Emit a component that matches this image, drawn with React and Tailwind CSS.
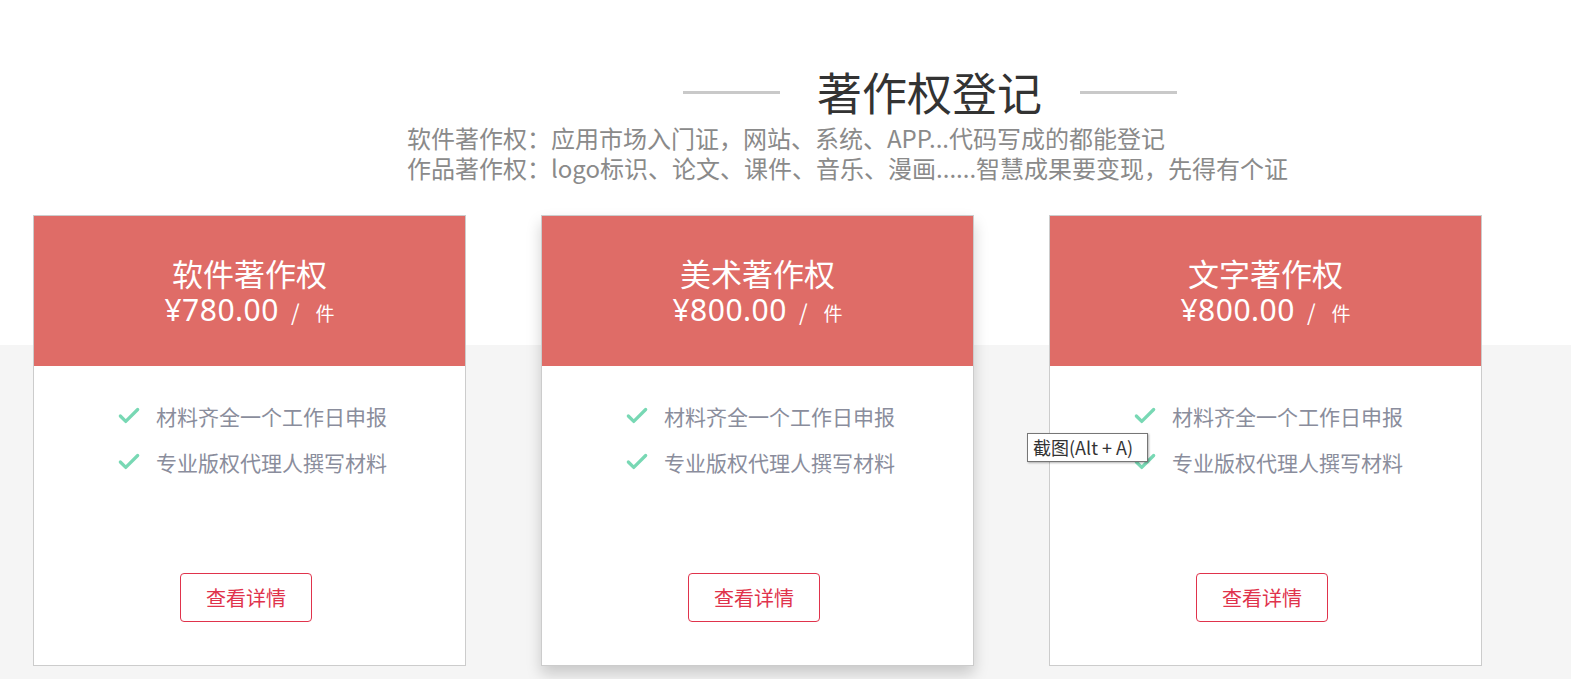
import { Check } from "lucide-react";

const plans = [
  { name: "软件著作权", price: "¥780.00" },
  { name: "美术著作权", price: "¥800.00", active: true },
  { name: "文字著作权", price: "¥800.00" },
];

const features = ["材料齐全一个工作日申报", "专业版权代理人撰写材料"];

function PlanCard({ plan }) {
  return (
    <div
      className={`w-[433px] h-[451px] bg-white border border-[#cccccc] flex flex-col ${
        plan.active ? "shadow-[0_8px_14px_rgba(0,0,0,0.18)]" : ""
      }`}
    >
      <div className="h-[150px] bg-[#df6c67] text-white flex flex-col items-center pt-[37px]">
        <h2 className="text-[31px] leading-[40px]">{plan.name}</h2>
        <p className="flex items-baseline leading-[34px]">
          <span className="text-[30px] font-['Noto_Sans',sans-serif] tracking-[0.5px]">{plan.price}</span>
          <span className="text-[22px] ml-3">/</span>
          <span className="text-[19px] ml-4">件</span>
        </p>
      </div>
      <ul className="pt-[37px] flex flex-col gap-[20px] pl-[82px]">
        {features.map((f) => (
          <li key={f} className="flex items-center gap-[14px] text-[21px] leading-[24px] text-[#8a8d9c]">
            <Check className="w-[26px] h-[26px] text-[#78d8b4]" strokeWidth={3} />
            <span>{f}</span>
          </li>
        ))}
      </ul>
      <div className="mt-auto mb-[43px] flex justify-center">
        <button className="w-[132px] h-[49px] border border-[#e0334c] rounded-[4px] text-[#e0334c] text-[20px] -ml-[7px]">
          查看详情
        </button>
      </div>
    </div>
  );
}

export default function App() {
  return (
    <div className="relative w-[1571px] h-[679px] overflow-hidden bg-white font-['Noto_Sans_CJK_SC','Noto_Sans',sans-serif]">
      <div className="absolute left-0 right-0 top-[345px] bottom-0 bg-[#f5f5f5]" />
      <div className="relative">
        <div className="pt-[61px] flex items-center pl-[683px]">
          <span className="w-[97px] h-[3px] bg-[#c9c9c9]" />
          <h1 className="ml-[37px] mr-[38px] text-[45px] leading-[62px] text-[#333333]">著作权登记</h1>
          <span className="w-[97px] h-[3px] bg-[#c9c9c9]" />
        </div>
        <div className="pl-[407px] text-[24px] leading-[30px] text-[#8a8a8a]">
          <p>软件著作权：应用市场入门证，网站、系统、APP...代码写成的都能登记</p>
          <p>作品著作权：logo标识、论文、课件、音乐、漫画......智慧成果要变现，先得有个证</p>
        </div>
        <div className="mt-[32px] pl-[33px] flex gap-[75px]">
          {plans.map((p) => (
            <PlanCard key={p.name} plan={p} />
          ))}
        </div>
      </div>
      <div className="absolute left-[1027px] top-[433px] w-[121px] h-[29px] px-[5px] bg-white border border-[#767676] shadow-[1px_1px_2px_rgba(0,0,0,0.3)] text-[18px] leading-[27px] text-[#333] whitespace-nowrap">
        截图(Alt + A)
      </div>
    </div>
  );
}
